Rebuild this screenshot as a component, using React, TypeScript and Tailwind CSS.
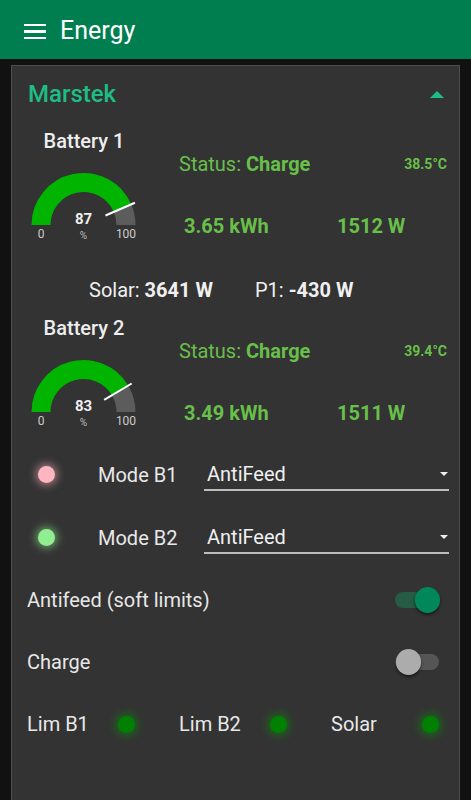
import React from "react";

type BatteryProps = {
  name: string;
  soc: number;
  temp: string;
  energy: string;
  power: string;
  heightClass: string;
};

function Gauge({ value }: { value: number }) {
  const cx = 71.5;
  const cy = 65;
  const r = 42.5;
  const a = Math.PI * (value / 100);
  const vx = cx - r * Math.cos(a);
  const vy = cy - r * Math.sin(a);
  const n1 = { x: cx - 24 * Math.cos(a), y: cy - 24 * Math.sin(a) };
  const n2 = { x: cx - 56 * Math.cos(a), y: cy - 56 * Math.sin(a) };
  return (
    <svg width="144" height="84" viewBox="0 0 144 84" className="block">
      <path d={`M ${cx - r} ${cy} A ${r} ${r} 0 0 1 ${vx} ${vy}`} fill="none" stroke="#00b400" strokeWidth="19" />
      <path d={`M ${vx} ${vy} A ${r} ${r} 0 0 1 ${cx + r} ${cy}`} fill="none" stroke="#5c5c5c" strokeWidth="19" />
      <line x1={n1.x} y1={n1.y} x2={n2.x} y2={n2.y} stroke="#ffffff" strokeWidth="2" />
      <text x={cx} y="64" textAnchor="middle" fill="#eeeeee" fontSize="15" fontWeight="700" fontFamily="Roboto, sans-serif">{value}</text>
      <text x={cx} y="79" textAnchor="middle" fill="#bbbbbb" fontSize="10" fontFamily="Roboto, sans-serif">%</text>
      <text x={cx - r} y="78" textAnchor="middle" fill="#cccccc" fontSize="12" fontFamily="Roboto, sans-serif">0</text>
      <text x={cx + r} y="78" textAnchor="middle" fill="#cccccc" fontSize="12" fontFamily="Roboto, sans-serif">100</text>
    </svg>
  );
}

function Battery({ name, soc, temp, energy, power, heightClass }: BatteryProps) {
  return (
    <div className={`flex ${heightClass}`}>
      <div className="w-[144px] flex flex-col items-center">
        <div className="h-[38px] flex items-center text-[20px] font-medium text-[#eeeeee]">{name}</div>
        <Gauge value={soc} />
      </div>
      <div className="flex-1 flex flex-col pt-[28px] pl-[23px] pr-[12px] text-[#68bf4a]">
        <div className="h-[28px] flex items-center justify-between">
          <span className="text-[20px]">
            Status: <span className="font-bold">Charge</span>
          </span>
          <span className="text-[14px] font-bold">{temp}</span>
        </div>
        <div className="h-[28px] mt-[34px] flex items-center pl-[5px] text-[20px] font-bold">
          <span className="w-[153px]">{energy}</span>
          <span>{power}</span>
        </div>
      </div>
    </div>
  );
}

function Led({ color, glow }: { color: string; glow: string }) {
  return <span className={`block w-[17px] h-[17px] rounded-full shrink-0 ${color} ${glow}`} />;
}

function ModeRow({ label, ledColor, ledGlow }: { label: string; ledColor: string; ledGlow: string }) {
  return (
    <div className="h-[63px] flex items-center">
      <div className="w-[86px] flex pl-[26px]">
        <Led color={ledColor} glow={ledGlow} />
      </div>
      <span className="w-[106px] text-[20px] text-[#e8e8e8]">{label}</span>
      <div className="flex-1 mr-[10px] relative h-[33px] flex items-center border-b-[2px] border-[#bdbdbd]">
        <span className="pl-[3px] text-[20px] text-[#f0f0f0]">AntiFeed</span>
        <span className="absolute right-[1px] top-[14px] w-0 h-0 border-l-[4px] border-r-[4px] border-t-[4px] border-l-transparent border-r-transparent border-t-[#eeeeee]" />
      </div>
    </div>
  );
}

function Toggle({ on }: { on: boolean }) {
  return (
    <div className="relative w-[46px] h-[26px] flex items-center">
      <span className={`block w-[44px] h-[16px] rounded-full ml-[1px] ${on ? "bg-[#245c45]" : "bg-[#555555]"}`} />
      <span
        className={`absolute top-0 w-[25px] h-[26px] rounded-full shadow-[0_2px_3px_rgba(0,0,0,0.5)] ${
          on ? "right-[0px] bg-[#00875a]" : "left-[2px] bg-[#acacac]"
        }`}
      />
    </div>
  );
}

export default function App() {
  return (
    <div className="w-[471px] h-[800px] overflow-hidden bg-[#111111] font-['Roboto',sans-serif]">
      <header className="h-[59px] bg-[#017e50] flex items-center pl-[24px] pt-[4px] gap-[14px]">
        <div className="flex flex-col gap-[4px] w-[22px]">
          <span className="block h-[2.5px] bg-white" />
          <span className="block h-[2.5px] bg-white" />
          <span className="block h-[2.5px] bg-white" />
        </div>
        <h1 className="text-[25px] text-white leading-none pb-[2px]">Energy</h1>
      </header>
      <div className="mt-[6px] mx-[11px] min-h-[760px] bg-[#333333] border border-[#4d4d4d]">
        <div className="h-[56px] flex items-center justify-between pl-[16px] pr-[15px]">
          <span className="text-[24px] font-medium text-[#1ebd85]">Marstek</span>
          <span className="w-0 h-0 border-l-[7px] border-r-[7px] border-b-[7px] border-l-transparent border-r-transparent border-b-[#1ebd85] mt-[1px]" />
        </div>
        <Battery name="Battery 1" soc={87} temp="38.5°C" energy="3.65 kWh" power="1512 W" heightClass="h-[148px]" />
        <div className="h-[39px] flex items-center pl-[77px] text-[20px] text-[#f0f0f0]">
          <span className="w-[166px]">
            Solar: <span className="font-bold">3641 W</span>
          </span>
          <span>
            P1: <span className="font-bold">-430 W</span>
          </span>
        </div>
        <Battery name="Battery 2" soc={83} temp="39.4°C" energy="3.49 kWh" power="1511 W" heightClass="h-[134px]" />
        <ModeRow label="Mode B1" ledColor="bg-[#ffb6c1]" ledGlow="shadow-[0_0_8px_2px_rgba(255,182,193,0.6)]" />
        <ModeRow label="Mode B2" ledColor="bg-[#90ee90]" ledGlow="shadow-[0_0_8px_2px_rgba(144,238,144,0.6)]" />
        <div className="h-[62px] flex items-center justify-between pl-[15px] pr-[19px]">
          <span className="text-[20px] text-[#e8e8e8]">Antifeed (soft limits)</span>
          <Toggle on />
        </div>
        <div className="h-[62px] flex items-center justify-between pl-[15px] pr-[19px]">
          <span className="text-[20px] text-[#e8e8e8]">Charge</span>
          <Toggle on={false} />
        </div>
        <div className="h-[62px] flex items-center pl-[15px]">
          {["Lim B1", "Lim B2", "Solar"].map((l, i) => (
            <div key={l} className={`flex items-center shrink-0 ${i < 2 ? "w-[152px]" : ""}`}>
              <span className="w-[91px] text-[20px] text-[#e8e8e8]">{l}</span>
              <Led color="bg-[#008000]" glow="shadow-[0_0_8px_3px_rgba(0,160,0,0.45)]" />
            </div>
          ))}
        </div>
      </div>
    </div>
  );
}
